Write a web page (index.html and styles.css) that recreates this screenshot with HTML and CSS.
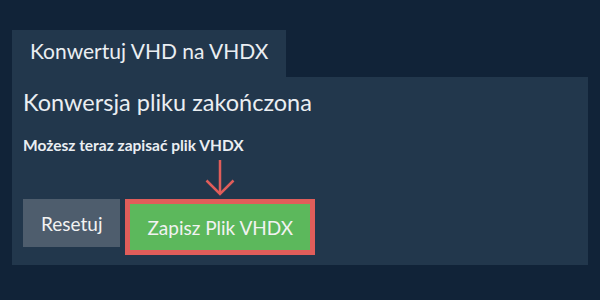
FILE: index.html
```html
<!DOCTYPE html>
<html lang="pl">
  <head>
    <meta charset="UTF-8" />
    <meta name="viewport" content="width=device-width, initial-scale=1.0" />
    <title>Konwertuj VHD na VHDX</title>
    <link rel="stylesheet" href="styles.css">
  </head>
  <body>
    <div class="tab">Konwertuj VHD na VHDX</div>

    <div class="panel">
      <h2>Konwersja pliku zakończona</h2>
      <p class="note">Możesz teraz zapisać plik VHDX</p>

      <div class="actions">
        <button class="reset-button">Resetuj</button>
        <div class="save-wrap">
          <!-- Pointer arrow above the save button -->
          <svg class="pointer" width="30" height="36" viewBox="0 0 30 36">
            <line x1="15" y1="0" x2="15" y2="34" stroke="#e05d5a" stroke-width="2.5" />
            <polyline points="1.5,20.5 15,34 28.5,20.5" fill="none" stroke="#e05d5a" stroke-width="2.5" />
          </svg>
          <button class="save-button">Zapisz Plik VHDX</button>
        </div>
      </div>
    </div>
  </body>
</html>
```

FILE: styles.css
```css
body {
  font-family: Lato, "Open Sans", sans-serif;
  background-color: #112338;
  color: #eaeef2;
  margin: 0;
  padding: 30px 12px 0;
}

.tab {
  display: inline-block;
  background-color: #22374c;
  font-size: 21px;
  padding: 8px 18px 14px;
}

.panel {
  background-color: #22374c;
  padding: 11px 11px 10px;
}

.panel h2 {
  font-size: 23.5px;
  font-weight: normal;
  margin: 0;
}

.note {
  font-size: 15.5px;
  font-weight: bold;
  margin: 20px 0 0;
}

.actions {
  display: flex;
  align-items: flex-start;
  gap: 5px;
  margin-top: 45px;
}

.actions button {
  font-family: inherit;
  font-size: 19px;
  color: #f2f2f2;
  border: none;
  border-radius: 0;
  cursor: pointer;
}

.reset-button {
  background-color: #4e5d6d;
  height: 48px;
  padding: 0 18px;
}

.save-wrap {
  position: relative;
}

.save-button {
  background-color: #5cb85c;
  border: 5px solid #e05d5a !important;
  height: 56px;
  padding: 0 17px;
}

.pointer {
  position: absolute;
  left: 50%;
  bottom: calc(100% + 3px);
  transform: translateX(-50%);
}
```
